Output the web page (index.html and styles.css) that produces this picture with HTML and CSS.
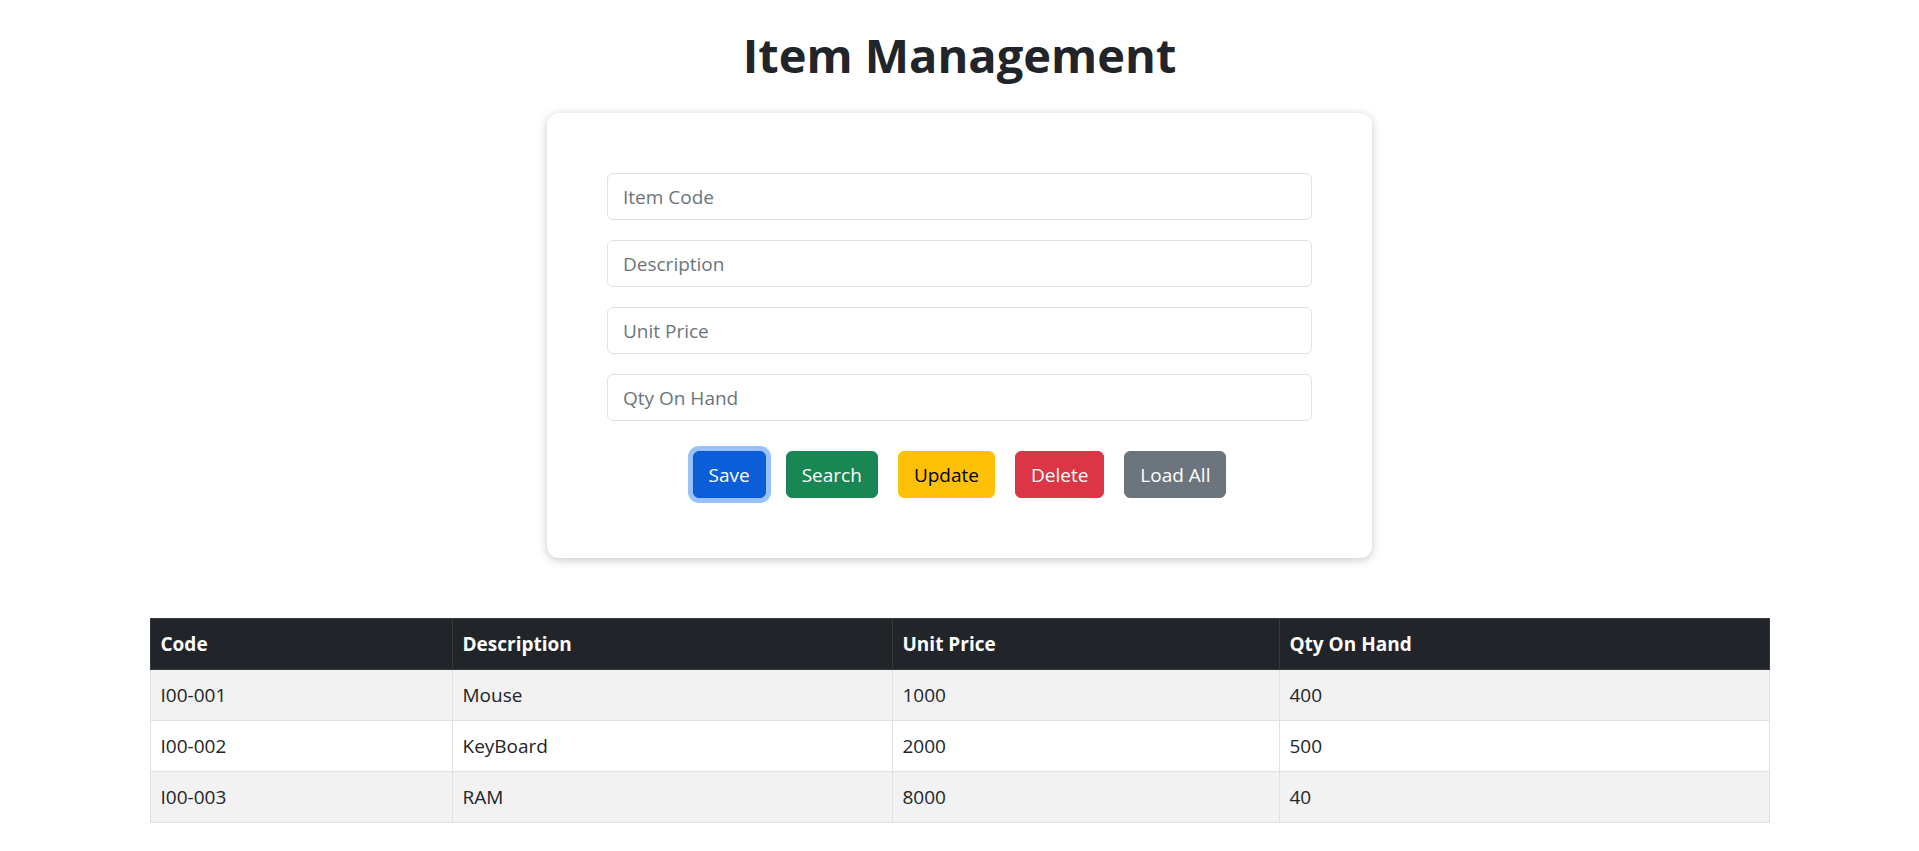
FILE: index.html
```html
<!DOCTYPE html>
<html lang="en">
<head>
<meta charset="utf-8">
<title>Item Management</title>
<link rel="stylesheet" href="styles.css">
</head>
<body>
<main class="page">
  <h1 class="title">Item Management</h1>
  <section class="card">
    <form class="item-form">
      <input class="field" type="text" placeholder="Item Code">
      <input class="field" type="text" placeholder="Description">
      <input class="field" type="text" placeholder="Unit Price">
      <input class="field field-last" type="text" placeholder="Qty On Hand">
      <div class="actions">
        <button type="button" class="btn btn-save">Save</button>
        <button type="button" class="btn btn-search">Search</button>
        <button type="button" class="btn btn-update">Update</button>
        <button type="button" class="btn btn-delete">Delete</button>
        <button type="button" class="btn btn-load">Load All</button>
      </div>
    </form>
  </section>
  <div class="table-wrap">
    <table class="items">
      <colgroup>
        <col class="col-code">
        <col class="col-desc">
        <col class="col-price">
        <col class="col-qty">
      </colgroup>
      <thead>
        <tr><th>Code</th><th>Description</th><th>Unit Price</th><th>Qty On Hand</th></tr>
      </thead>
      <tbody>
        <tr class="striped"><td>I00-001</td><td>Mouse</td><td>1000</td><td>400</td></tr>
        <tr><td>I00-002</td><td>KeyBoard</td><td>2000</td><td>500</td></tr>
        <tr class="striped"><td>I00-003</td><td>RAM</td><td>8000</td><td>40</td></tr>
      </tbody>
    </table>
  </div>
</main>
</body>
</html>
```

FILE: styles.css
```css
* { box-sizing: border-box; }

body {
  margin: 0;
  background: #fff;
  color: #212529;
  font-family: "Open Sans", "Noto Sans", "Liberation Sans", sans-serif;
}

.page {
  display: flex;
  flex-direction: column;
  align-items: center;
  padding-top: 25px;
}

.title {
  margin: 0 0 28px;
  font-size: 47px;
  line-height: 60px;
  font-weight: 700;
}

.card {
  width: 825px;
  padding: 60px;
  background: #fff;
  border-radius: 12px;
  box-shadow: 0 2px 10px rgba(0, 0, 0, 0.22);
}

.item-form {
  display: flex;
  flex-direction: column;
}

.field {
  display: block;
  width: 100%;
  height: 47px;
  margin: 0 0 20px;
  padding: 0 15px;
  border: 1px solid #dee2e6;
  border-radius: 6px;
  font-family: inherit;
  font-size: 19px;
  color: #212529;
  background: #fff;
}

.field::placeholder { color: #6c757d; }

.field-last { margin-bottom: 30px; }

.actions {
  display: flex;
  justify-content: center;
  gap: 20px;
}

.btn {
  height: 47px;
  padding: 0 15px;
  border: 1px solid transparent;
  border-radius: 6px;
  font-family: inherit;
  font-size: 19px;
  line-height: 30px;
  color: #fff;
}

.btn-save {
  background: #0b5ed7;
  border-color: #0a58ca;
  box-shadow: 0 0 0 5px rgba(49, 132, 253, 0.5);
}

.btn-search { background: #198754; border-color: #198754; }
.btn-update { background: #ffc107; border-color: #ffc107; color: #000; }
.btn-delete { background: #dc3545; border-color: #dc3545; }
.btn-load { background: #6c757d; border-color: #6c757d; }

.table-wrap {
  width: 1620px;
  margin-top: 60px;
}

.items {
  width: 100%;
  border-collapse: collapse;
  table-layout: fixed;
}

.col-code { width: 302px; }
.col-desc { width: 440px; }
.col-price { width: 387px; }

.items th,
.items td {
  padding: 10px;
  border: 1px solid #dee2e6;
  text-align: left;
  font-size: 19px;
  line-height: 30px;
}

.items th {
  background: #212529;
  color: #fff;
  font-weight: 700;
  border-color: #373b3e;
}

.items tr.striped td { background: #f2f2f2; }
```
